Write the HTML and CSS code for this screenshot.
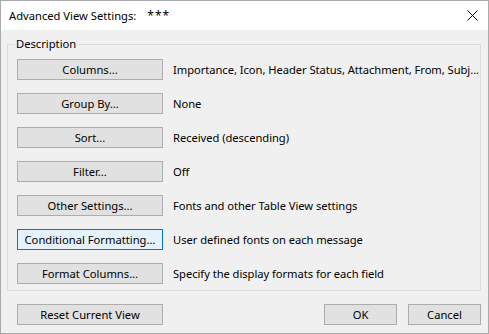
FILE: index.html
```html
<!DOCTYPE html>
<html>
<head>
<meta charset="utf-8">
<link rel="stylesheet" href="styles.css">
</head>
<body>
<div class="window">
  <div class="titlebar">
    <span class="title">Advanced View Settings:</span>
    <span class="title-name">***</span>
    <span class="close">
      <svg width="11" height="11" viewBox="0 0 11 11"><path d="M0.5 0.5 L10.5 10.5 M10.5 0.5 L0.5 10.5" stroke="#000" stroke-width="1" fill="none"/></svg>
    </span>
  </div>
  <div class="content">
    <div class="group">
      <span class="group-label">Description</span>
      <div class="row"><button class="btn wide">Columns...</button><span class="desc">Importance, Icon, Header Status, Attachment, From, Subj...</span></div>
      <div class="row"><button class="btn wide">Group By...</button><span class="desc">None</span></div>
      <div class="row"><button class="btn wide">Sort...</button><span class="desc">Received (descending)</span></div>
      <div class="row"><button class="btn wide">Filter...</button><span class="desc">Off</span></div>
      <div class="row"><button class="btn wide">Other Settings...</button><span class="desc">Fonts and other Table View settings</span></div>
      <div class="row"><button class="btn wide focus">Conditional Formatting...</button><span class="desc">User defined fonts on each message</span></div>
      <div class="row"><button class="btn wide">Format Columns...</button><span class="desc">Specify the display formats for each field</span></div>
    </div>
    <div class="footer">
      <button class="btn wide">Reset Current View</button>
      <div class="spacer"></div>
      <button class="btn small">OK</button>
      <button class="btn small">Cancel</button>
    </div>
  </div>
</div>
</body>
</html>
```
FILE: styles.css
```css
html, body {
  margin: 0;
  padding: 0;
  background: #f0f0f0;
}
.window {
  width: 489px;
  height: 334px;
  box-sizing: border-box;
  border: 1px solid #aaaaaa;
  background: #f0f0f0;
  font-family: "Noto Sans", "DejaVu Sans", sans-serif;
  font-size: 11.2px;
  color: #000;
  display: flex;
  flex-direction: column;
}
.titlebar {
  height: 29px;
  background: #ffffff;
  display: flex;
  align-items: center;
  padding-left: 8px;
}
.title-name {
  margin-left: 11px;
  font-size: 12px;
  letter-spacing: 1px;
}
.close {
  margin-left: auto;
  margin-right: 10px;
  display: flex;
}
.close svg {
  display: block;
}
.content {
  padding: 14px 7px 0 6px;
}
.group {
  position: relative;
  border: 1px solid #dcdcdc;
  padding: 14px 0 6px 9px;
  display: flex;
  flex-direction: column;
  gap: 13px;
}
.group-label {
  position: absolute;
  top: -9px;
  left: 7px;
  padding: 0 1px;
  background: #f0f0f0;
  line-height: 16px;
}
.row {
  display: flex;
  align-items: center;
  gap: 10px;
}
.btn {
  font-family: inherit;
  font-size: inherit;
  color: #000;
  height: 21px;
  box-sizing: border-box;
  border: 1px solid #adadad;
  background: #e1e1e1;
  padding: 0;
  margin: 0;
  line-height: 19px;
  text-align: center;
  flex-shrink: 0;
}
.btn.wide {
  width: 146px;
}
.btn.small {
  width: 73px;
}
.btn.focus {
  border-color: #0078d7;
  background: #e5f1fb;
}
.desc {
  white-space: nowrap;
  letter-spacing: -0.05px;
}
.footer {
  display: flex;
  align-items: center;
  gap: 11px;
  margin-top: 13px;
  padding-left: 10px;
}
.spacer {
  flex: 1;
}
```
